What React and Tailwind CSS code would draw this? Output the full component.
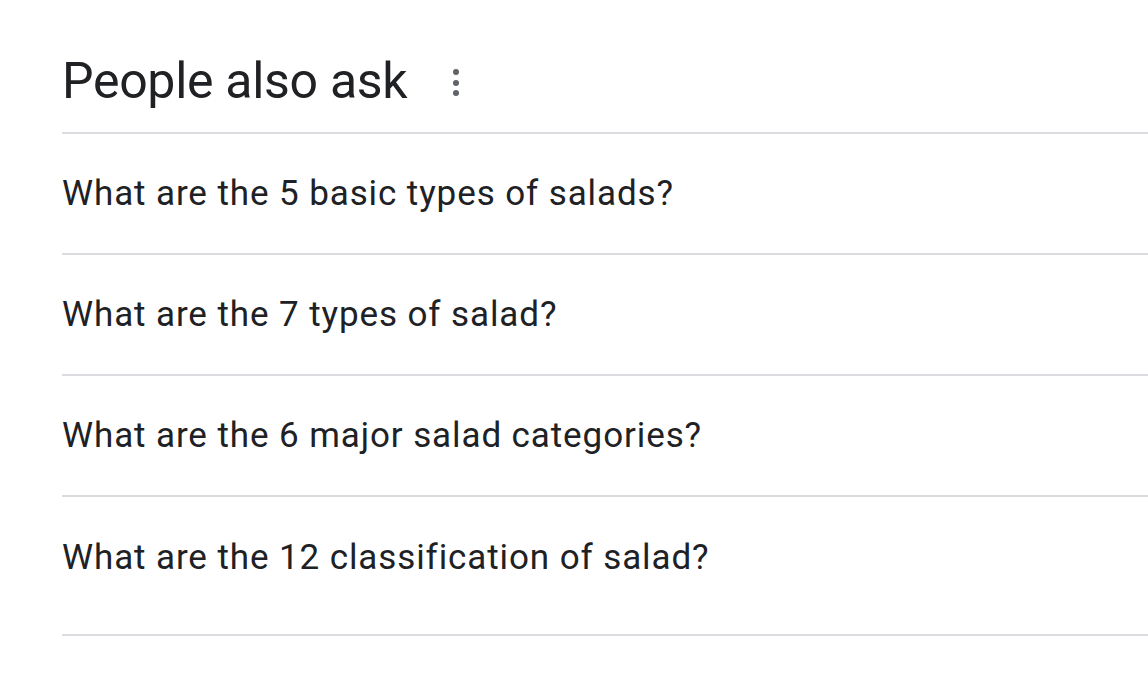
import React from 'react';

const questions = [
  'What are the 5 basic types of salads?',
  'What are the 7 types of salad?',
  'What are the 6 major salad categories?',
  'What are the 12 classification of salad?',
];

const App = () => {
  return (
    <div className="min-h-screen bg-white pl-[62px] text-[#202124]" style={{ fontFamily: 'Roboto, "Noto Sans", sans-serif' }}>
      <div className="flex items-end h-[132px] pb-[26px]">
        <h2 className="text-[50px] leading-none tracking-[-0.3px]">People also ask</h2>
        <div className="ml-[46px] mb-[10px] flex flex-col items-center gap-[4.5px]">
          <span className="block w-[6px] h-[6px] rounded-full bg-[#5f6368]" />
          <span className="block w-[6px] h-[6px] rounded-full bg-[#5f6368]" />
          <span className="block w-[6px] h-[6px] rounded-full bg-[#5f6368]" />
        </div>
      </div>
      <div className="border-t-2 border-[#dadce0]">
        {questions.map((q, i) => (
          <div key={i} className={`flex items-center border-b-2 border-[#dadce0] ${i === 3 ? 'h-[139px] pb-[16px]' : 'h-[121px]'}`}>
            <span className="text-[35px] leading-none tracking-[0.9px]">{q}</span>
          </div>
        ))}
      </div>
    </div>
  );
};

export default App;
